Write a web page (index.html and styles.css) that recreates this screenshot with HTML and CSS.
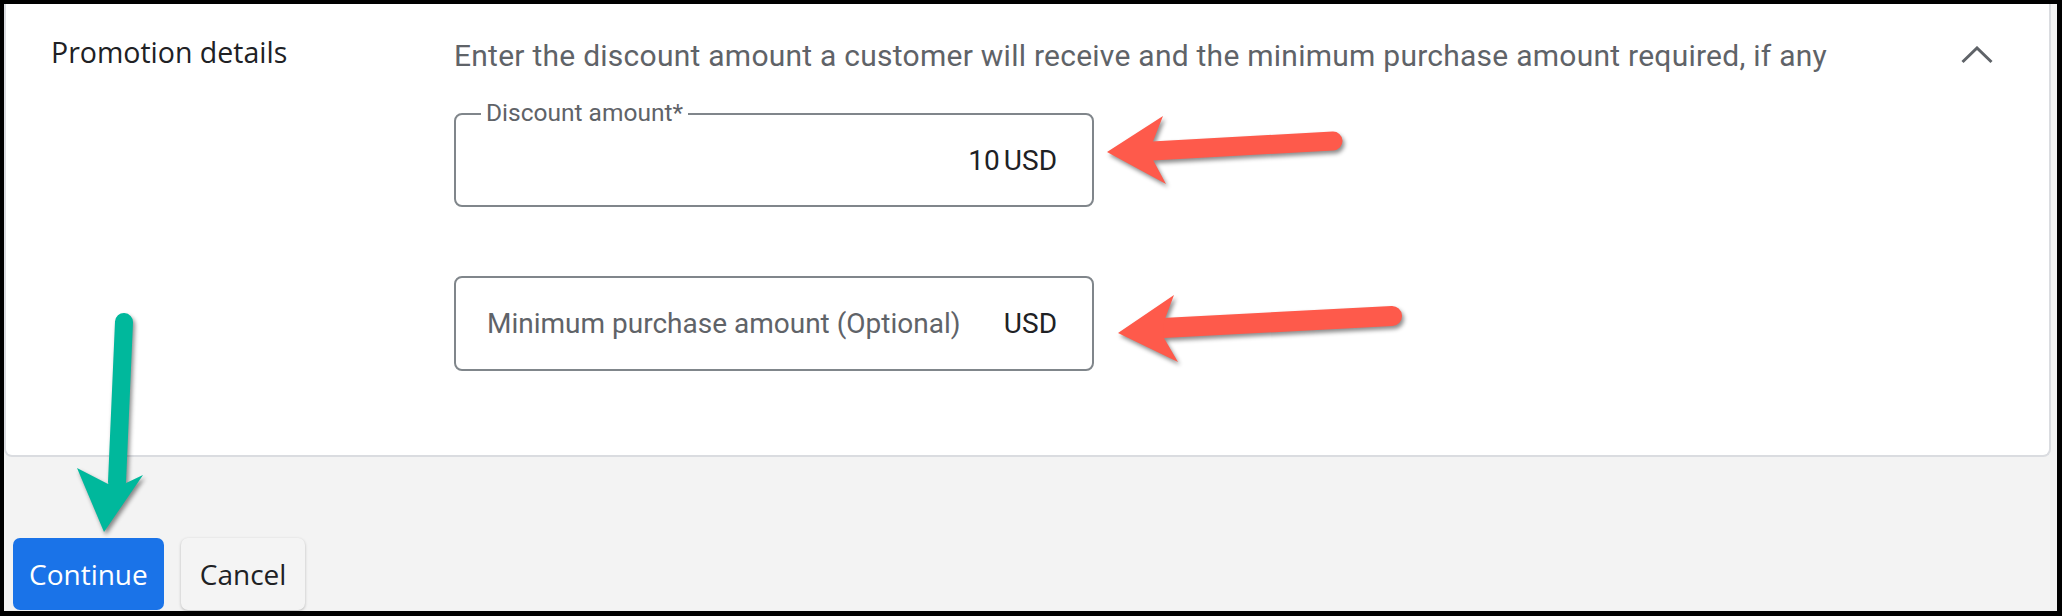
FILE: index.html
```html
<!DOCTYPE html>
<html lang="en">
<head>
  <meta charset="UTF-8">
  <title>Promotion details</title>
  <link rel="stylesheet" href="styles.css">
</head>
<body>
  <div class="screen">
    <div class="page">
      <section class="card">
        <h2 class="card-title">Promotion details</h2>

        <div class="card-body">
          <p class="hint">Enter the discount amount a customer will receive and the minimum purchase amount required, if any</p>

          <div class="field filled">
            <span class="field-label">Discount amount*</span>
            <span class="field-value">10</span>
            <span class="suffix">USD</span>
          </div>

          <div class="field">
            <span class="placeholder">Minimum purchase amount (Optional)</span>
            <span class="suffix">USD</span>
          </div>
        </div>

        <button class="toggle" aria-label="Collapse">
          <svg width="32" height="18" viewBox="0 0 32 18">
            <polyline points="1.5,16 16,2 30.5,16" fill="none" stroke="#5f6368" stroke-width="3"/>
          </svg>
        </button>
      </section>

      <div class="actions">
        <button class="btn btn-primary">Continue</button>
        <button class="btn btn-secondary">Cancel</button>
      </div>
    </div>

    <!-- annotation arrows drawn over the screenshot -->
    <svg class="marks" width="2062" height="616" viewBox="0 0 2062 616">
      <g class="arrow-red">
        <line x1="1152" y1="151" x2="1333" y2="141" stroke="#fe5a4b" stroke-width="19" stroke-linecap="round"/>
        <path d="M1107 152 L1163 116 L1152 144 L1152 158 L1166 184 Z" fill="#fe5a4b"/>
      </g>
      <g class="arrow-red">
        <line x1="1163" y1="328" x2="1392" y2="316" stroke="#fe5a4b" stroke-width="20" stroke-linecap="round"/>
        <path d="M1118 333 L1174 295 L1163 324 L1164 338 L1178 362 Z" fill="#fe5a4b"/>
      </g>
      <g class="arrow-green">
        <line x1="124" y1="322" x2="117" y2="482" stroke="#00b89c" stroke-width="18" stroke-linecap="round"/>
        <path d="M104 532 L77 468 L108 484 L124 484 L143 475 Z" fill="#00b89c"/>
      </g>
    </svg>
  </div>
</body>
</html>
```

FILE: styles.css
```css
html, body {
  margin: 0;
  height: 100%;
}

body {
  background-color: #000;
  font-family: 'Roboto', 'Liberation Sans', sans-serif;
  color: #202124;
}

.screen {
  position: relative;
  box-sizing: border-box;
  height: 100vh;
  padding: 4px 5px 5px 4px;
}

.page {
  height: 100%;
  background-color: #f3f3f3;
  display: flex;
  flex-direction: column;
}

.card {
  box-sizing: border-box;
  height: 453px;
  margin-right: 6px;
  padding: 30px 56px 0 45px;
  background-color: #fff;
  border: 2px solid #dadce0;
  border-top: none;
  border-radius: 0 0 8px 8px;
  display: grid;
  grid-template-columns: 403px 1fr auto;
  align-items: start;
}

.card-title {
  margin: 0;
  font-family: 'Open Sans', sans-serif;
  font-size: 28.5px;
  font-weight: 400;
  line-height: 36px;
  color: #202124;
}

.hint {
  margin: 0;
  font-size: 30px;
  letter-spacing: 0.25px;
  line-height: 44px;
  color: #5f6368;
}

.field {
  position: relative;
  box-sizing: border-box;
  width: 640px;
  height: 94px;
  padding: 0 35px 0 31px;
  border: 2px solid #80868b;
  border-radius: 8px;
  display: flex;
  align-items: center;
  font-size: 28px;
}

.field.filled {
  margin-top: 35px;
  justify-content: flex-end;
}

.field + .field {
  margin-top: 69px;
  height: 95px;
  justify-content: space-between;
}

.field-label {
  position: absolute;
  top: -16px;
  left: 25px;
  padding: 0 5px;
  background-color: #fff;
  font-size: 24.5px;
  line-height: 28px;
  color: #5f6368;
}

.field-value {
  color: #202124;
}

.suffix {
  margin-left: 4px;
  color: #202124;
}

.placeholder {
  color: #5f6368;
}

.toggle {
  margin-top: 12px;
  padding: 0;
  border: none;
  background: none;
  line-height: 0;
}

.actions {
  margin-top: auto;
  padding: 0 0 1px 9px;
  display: flex;
  gap: 17px;
}

.btn {
  height: 72px;
  padding: 0 16px;
  border: none;
  border-radius: 7px;
  font-family: 'Open Sans', sans-serif;
  font-size: 28px;
  font-weight: 500;
  cursor: pointer;
}

.btn-primary {
  background-color: #1a73e8;
  color: #fff;
}

.btn-secondary {
  padding: 0 19px;
  background-color: #f4f4f4;
  color: #202124;
  box-shadow: 0 1px 3px rgba(0, 0, 0, 0.25);
}

.marks {
  position: absolute;
  top: 0;
  left: 0;
  pointer-events: none;
}

.arrow-red,
.arrow-green {
  filter: drop-shadow(2px 3px 2px rgba(0, 0, 0, 0.45));
}
```
